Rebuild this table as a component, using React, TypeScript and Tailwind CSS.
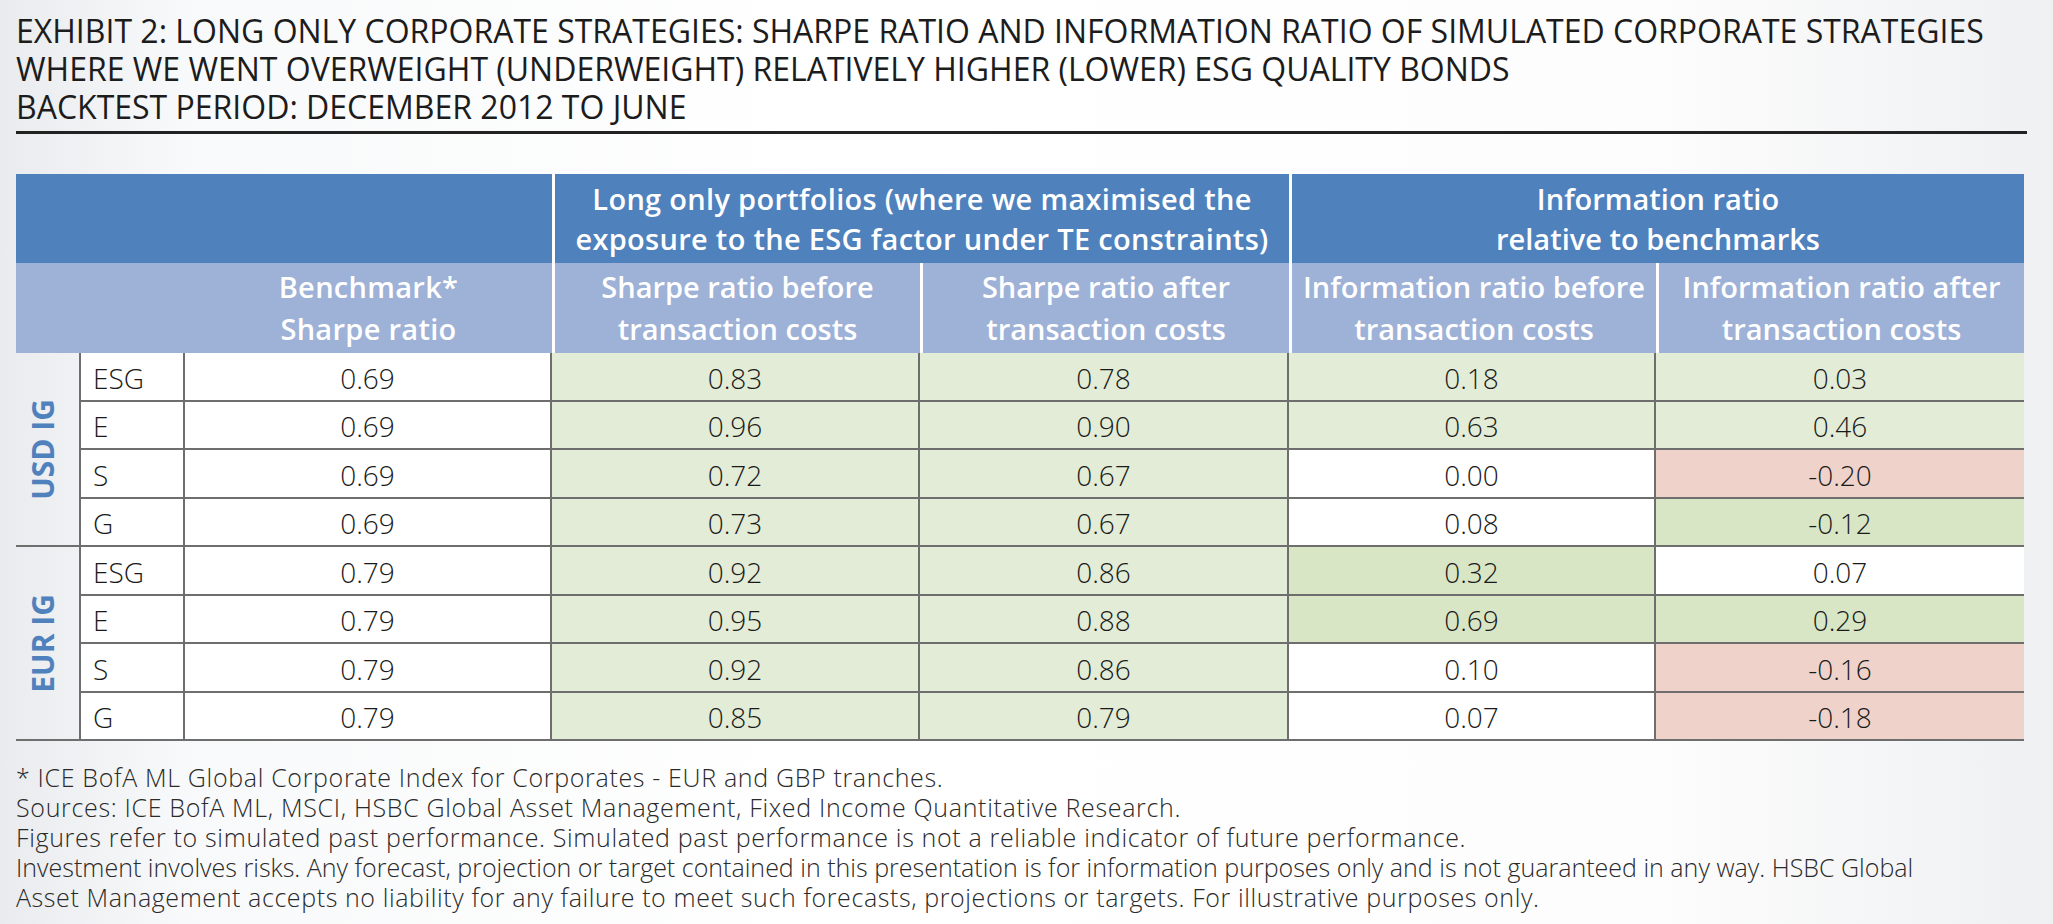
import React from "react";

type Tone = "w" | "g" | "G" | "r";

const toneClass: Record<Tone, string> = {
  w: "bg-white",
  g: "bg-[#e2ecd6]",
  G: "bg-[#d8e6c5]",
  r: "bg-[#efd3ca]",
};

type Row = { label: string; vals: [string, Tone][] };

const groups: { name: string; rows: Row[] }[] = [
  {
    name: "USD IG",
    rows: [
      { label: "ESG", vals: [["0.69", "w"], ["0.83", "g"], ["0.78", "g"], ["0.18", "g"], ["0.03", "g"]] },
      { label: "E", vals: [["0.69", "w"], ["0.96", "g"], ["0.90", "g"], ["0.63", "g"], ["0.46", "g"]] },
      { label: "S", vals: [["0.69", "w"], ["0.72", "g"], ["0.67", "g"], ["0.00", "w"], ["-0.20", "r"]] },
      { label: "G", vals: [["0.69", "w"], ["0.73", "g"], ["0.67", "g"], ["0.08", "w"], ["-0.12", "G"]] },
    ],
  },
  {
    name: "EUR IG",
    rows: [
      { label: "ESG", vals: [["0.79", "w"], ["0.92", "g"], ["0.86", "g"], ["0.32", "G"], ["0.07", "w"]] },
      { label: "E", vals: [["0.79", "w"], ["0.95", "g"], ["0.88", "g"], ["0.69", "G"], ["0.29", "G"]] },
      { label: "S", vals: [["0.79", "w"], ["0.92", "g"], ["0.86", "g"], ["0.10", "w"], ["-0.16", "r"]] },
      { label: "G", vals: [["0.79", "w"], ["0.85", "g"], ["0.79", "g"], ["0.07", "w"], ["-0.18", "r"]] },
    ],
  },
];

const rowHeights = ["h-[49px]", "h-[48px]", "h-[49px]", "h-[48px]"];

export default function App() {
  return (
    <div className="w-[2053px] h-[924px] overflow-hidden bg-[linear-gradient(to_right,#e9ebee_0%,#f8f9fa_9%,#ffffff_40%,#fdfdfd_80%,#eff0f2_100%)] pl-[16px] pt-[12px] font-['Open_Sans',sans-serif]">
      <div className="w-[2011px] border-b-[3px] border-[#222222] pb-[5px] text-[32px] font-normal leading-[38px] text-[#1c1c1c]">
        <div className="whitespace-nowrap">
          EXHIBIT 2: LONG ONLY CORPORATE STRATEGIES: SHARPE RATIO AND INFORMATION RATIO OF SIMULATED CORPORATE STRATEGIES
        </div>
        <div className="whitespace-nowrap">
          WHERE WE WENT OVERWEIGHT (UNDERWEIGHT) RELATIVELY HIGHER (LOWER) ESG QUALITY BONDS
        </div>
        <div className="whitespace-nowrap">BACKTEST PERIOD: DECEMBER 2012 TO JUNE</div>
      </div>

      <div className="mt-[40px] grid w-[2008px] grid-cols-[65px_104px_367px_368px_369px_367px_368px]">
        {/* dark header */}
        <div className="col-span-3 h-[89px] bg-[#4f81bd]" />
        <div className="col-span-2 flex h-[89px] flex-col items-center justify-center border-l-[3px] border-white bg-[#4f81bd] text-[29px] font-semibold leading-[40px] tracking-[0.3px] text-white">
          <div className="whitespace-nowrap">Long only portfolios (where we maximised the</div>
          <div className="whitespace-nowrap">exposure to the ESG factor under TE constraints)</div>
        </div>
        <div className="col-span-2 flex h-[89px] flex-col items-center justify-center border-l-[3px] border-white bg-[#4f81bd] text-[29px] font-semibold leading-[40px] text-white">
          <div className="whitespace-nowrap">Information ratio</div>
          <div className="whitespace-nowrap">relative to benchmarks</div>
        </div>

        {/* light header */}
        <div className="col-span-2 h-[90px] bg-[#9eb1d6]" />
        <div className="flex h-[90px] flex-col items-center justify-center bg-[#9eb1d6] text-[29px] font-semibold leading-[42px] tracking-[0.3px] text-white">
          <div className="whitespace-nowrap">Benchmark*</div>
          <div className="whitespace-nowrap">Sharpe ratio</div>
        </div>
        {[
          ["Sharpe ratio before", "transaction costs"],
          ["Sharpe ratio after", "transaction costs"],
          ["Information ratio before", "transaction costs"],
          ["Information ratio after", "transaction costs"],
        ].map(([a, b]) => (
          <div
            key={a}
            className="flex h-[90px] flex-col items-center justify-center border-l-[3px] border-white bg-[#9eb1d6] text-[29px] font-semibold leading-[42px] text-white"
          >
            <div className="whitespace-nowrap">{a}</div>
            <div className="whitespace-nowrap">{b}</div>
          </div>
        ))}

        {/* body */}
        {groups.map((g) => (
          <React.Fragment key={g.name}>
            <div className="row-span-4 flex items-center justify-center border-b-2 border-r-2 border-[#6e6e6e] pr-[10px]">
              <span className="rotate-180 whitespace-nowrap text-[30px] font-bold leading-[30px] text-[#4f81bd] [writing-mode:vertical-rl]">
                {g.name}
              </span>
            </div>
            {g.rows.map((r, ri) => (
              <React.Fragment key={r.label}>
                <div
                  className={`${rowHeights[ri]} flex items-center border-b-2 border-r-2 border-[#6e6e6e] bg-white pl-[12px] pt-[2px] text-[28px] font-light leading-[30px] text-[#1a1a1a]`}
                >
                  {r.label}
                </div>
                {r.vals.map(([v, t], vi) => (
                  <div
                    key={vi}
                    className={`${rowHeights[ri]} ${toneClass[t]} ${vi < 4 ? "border-r-2" : ""} flex items-center justify-center border-b-2 border-[#6e6e6e] pt-[2px] text-[28px] font-light leading-[30px] text-[#1a1a1a]`}
                  >
                    {v}
                  </div>
                ))}
              </React.Fragment>
            ))}
          </React.Fragment>
        ))}
      </div>

      <div className="mt-[21px] text-[25px] font-light leading-[30px] text-[#2a2a2a]">
        <div className="whitespace-nowrap tracking-[0.66px]">
          * ICE BofA ML Global Corporate Index for Corporates - EUR and GBP tranches.
        </div>
        <div className="whitespace-nowrap tracking-[0.67px]">
          Sources: ICE BofA ML, MSCI, HSBC Global Asset Management, Fixed Income Quantitative Research.
        </div>
        <div className="whitespace-nowrap tracking-[0.65px]">
          Figures refer to simulated past performance. Simulated past performance is not a reliable indicator of future performance.
        </div>
        <div className="whitespace-nowrap tracking-[0.01px]">
          Investment involves risks. Any forecast, projection or target contained in this presentation is for information purposes only and is not guaranteed in any way. HSBC Global
        </div>
        <div className="whitespace-nowrap tracking-[0.6px]">
          Asset Management accepts no liability for any failure to meet such forecasts, projections or targets. For illustrative purposes only.
        </div>
      </div>
    </div>
  );
}
